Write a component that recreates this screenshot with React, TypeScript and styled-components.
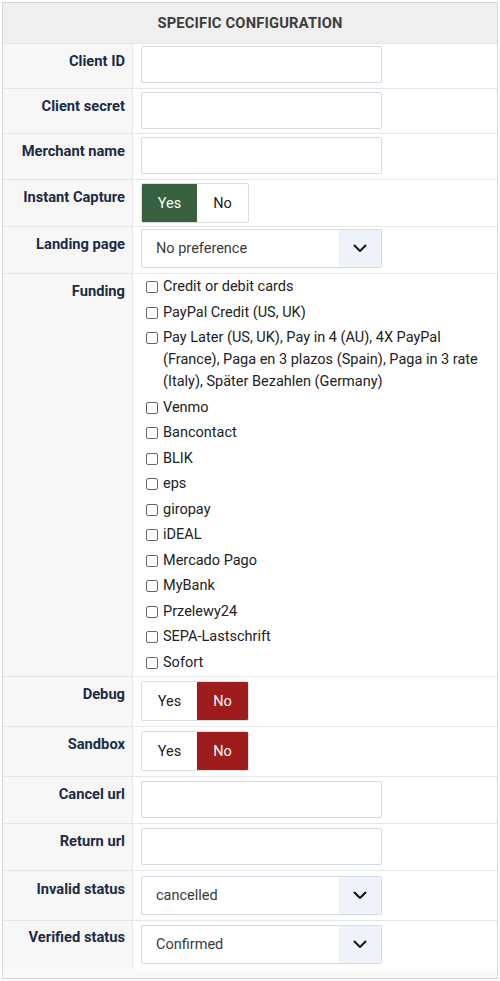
import React from "react";
import styled, { createGlobalStyle } from "styled-components";

const Global = createGlobalStyle`
  html, body { margin: 0; padding: 0; background: #fff; }
  body { font-family: Roboto, "Noto Sans", "Liberation Sans", sans-serif; font-size: 14.5px; }
  * { box-sizing: border-box; }
`;

const Panel = styled.div`
  margin: 2px 2px 0 2px;
  width: 496px;
  border: 1px solid #d6d6d6;
  background: #fafafa;
  padding-bottom: 9px;
`;

const Header = styled.div`
  height: 40px;
  background: #efefef;
  display: flex;
  align-items: center;
  justify-content: center;
  font-weight: 700;
  font-size: 14.7px;
  color: #3d3d3d;
  text-transform: uppercase;
  letter-spacing: 0.2px;
`;

const Row = styled.div<{ $h: number }>`
  display: grid;
  grid-template-columns: 130px 1fr;
  height: ${(p) => p.$h}px;
  border-top: 1px solid #e6e6e6;
  background: #fff;
`;

const Label = styled.div<{ $pt?: number }>`
  background: #f7f7f7;
  border-right: 1px solid #e8e8e8;
  text-align: right;
  padding: ${(p) => p.$pt ?? 9}px 7px 0 0;
  font-weight: 700;
  font-size: 14.7px;
  line-height: 17px;
  color: #1c2b45;
  white-space: nowrap;
`;

const Value = styled.div<{ $pt?: number }>`
  padding: ${(p) => p.$pt ?? 3}px 8px 0 8px;
`;

const TextInput = styled.div`
  width: 241px;
  height: 37px;
  border: 1px solid #d5dbe2;
  border-radius: 2px;
  background: #fff;
`;

const SelectBox = styled.div`
  width: 241px;
  height: 39px;
  border: 1px solid #d5dbe2;
  border-radius: 2px;
  background: #fff;
  display: flex;
  align-items: stretch;
`;

const SelectText = styled.div`
  flex: 1;
  display: flex;
  align-items: center;
  padding-left: 14px;
  font-size: 14.5px;
  color: #3b3b3b;
`;

const SelectArrow = styled.div`
  width: 42px;
  background: #eef3f9;
  display: flex;
  align-items: center;
  justify-content: center;
`;

const Toggle = styled.div`
  display: inline-flex;
  height: 40px;
  border: 1px solid #dcdcdc;
  border-radius: 2px;
  overflow: hidden;
`;

const ToggleBtn = styled.div<{ $active?: "green" | "red"; $w: number }>`
  width: ${(p) => p.$w}px;
  display: flex;
  align-items: center;
  justify-content: center;
  font-size: 14.5px;
  background: ${(p) => (p.$active === "green" ? "#36603e" : p.$active === "red" ? "#9e1c1c" : "#fff")};
  color: ${(p) => (p.$active ? "#fff" : "#222")};
`;

const CheckList = styled.div`
  display: flex;
  flex-direction: column;
  gap: 3.5px;
  padding: 2px 6px 0 13px;
`;

const CheckItem = styled.div`
  display: flex;
  align-items: flex-start;
  font-size: 14.5px;
  line-height: 22px;
  color: #222;
`;

const Box = styled.span`
  flex: none;
  width: 12px;
  height: 12px;
  border: 1px solid #666;
  border-radius: 2px;
  margin: 5px 5px 0 0;
  background: #fff;
`;

const Chevron = () => (
  <svg width="14" height="9" viewBox="0 0 14 9">
    <path d="M1.5 1.5 L7 7 L12.5 1.5" fill="none" stroke="#111" strokeWidth="2" strokeLinecap="round" strokeLinejoin="round" />
  </svg>
);

const Select = ({ text }: { text: string }) => (
  <SelectBox>
    <SelectText>{text}</SelectText>
    <SelectArrow>
      <Chevron />
    </SelectArrow>
  </SelectBox>
);

const YesNo = ({ yes }: { yes: boolean }) => (
  <Toggle>
    <ToggleBtn $w={55} $active={yes ? "green" : undefined}>Yes</ToggleBtn>
    <ToggleBtn $w={51} $active={yes ? undefined : "red"}>No</ToggleBtn>
  </Toggle>
);

const funding = [
  "Credit or debit cards",
  "PayPal Credit (US, UK)",
  "Pay Later (US, UK), Pay in 4 (AU), 4X PayPal (France), Paga en 3 plazos (Spain), Paga in 3 rate (Italy), Später Bezahlen (Germany)",
  "Venmo",
  "Bancontact",
  "BLIK",
  "eps",
  "giropay",
  "iDEAL",
  "Mercado Pago",
  "MyBank",
  "Przelewy24",
  "SEPA-Lastschrift",
  "Sofort",
];

export default function App() {
  return (
    <>
      <Global />
      <Panel>
        <Header>Specific configuration</Header>
        <Row $h={45}>
          <Label>Client ID</Label>
          <Value $pt={2}><TextInput /></Value>
        </Row>
        <Row $h={45}>
          <Label>Client secret</Label>
          <Value><TextInput /></Value>
        </Row>
        <Row $h={46}>
          <Label>Merchant name</Label>
          <Value><TextInput /></Value>
        </Row>
        <Row $h={47}>
          <Label>Instant Capture</Label>
          <Value><YesNo yes /></Value>
        </Row>
        <Row $h={47}>
          <Label>Landing page</Label>
          <Value $pt={2}><Select text="No preference" /></Value>
        </Row>
        <Row $h={403}>
          <Label>Funding</Label>
          <CheckList>
            {funding.map((f) => (
              <CheckItem key={f}>
                <Box />
                <span>{f}</span>
              </CheckItem>
            ))}
          </CheckList>
        </Row>
        <Row $h={50}>
          <Label>Debug</Label>
          <Value $pt={4}><YesNo yes={false} /></Value>
        </Row>
        <Row $h={50}>
          <Label>Sandbox</Label>
          <Value $pt={4}><YesNo yes={false} /></Value>
        </Row>
        <Row $h={47}>
          <Label>Cancel url</Label>
          <Value $pt={4}><TextInput /></Value>
        </Row>
        <Row $h={47}>
          <Label>Return url</Label>
          <Value $pt={4}><TextInput /></Value>
        </Row>
        <Row $h={50}>
          <Label $pt={10}>Invalid status</Label>
          <Value $pt={5}><Select text="cancelled" /></Value>
        </Row>
        <Row $h={49}>
          <Label $pt={8}>Verified status</Label>
          <Value $pt={4}><Select text="Confirmed" /></Value>
        </Row>
      </Panel>
    </>
  );
}
